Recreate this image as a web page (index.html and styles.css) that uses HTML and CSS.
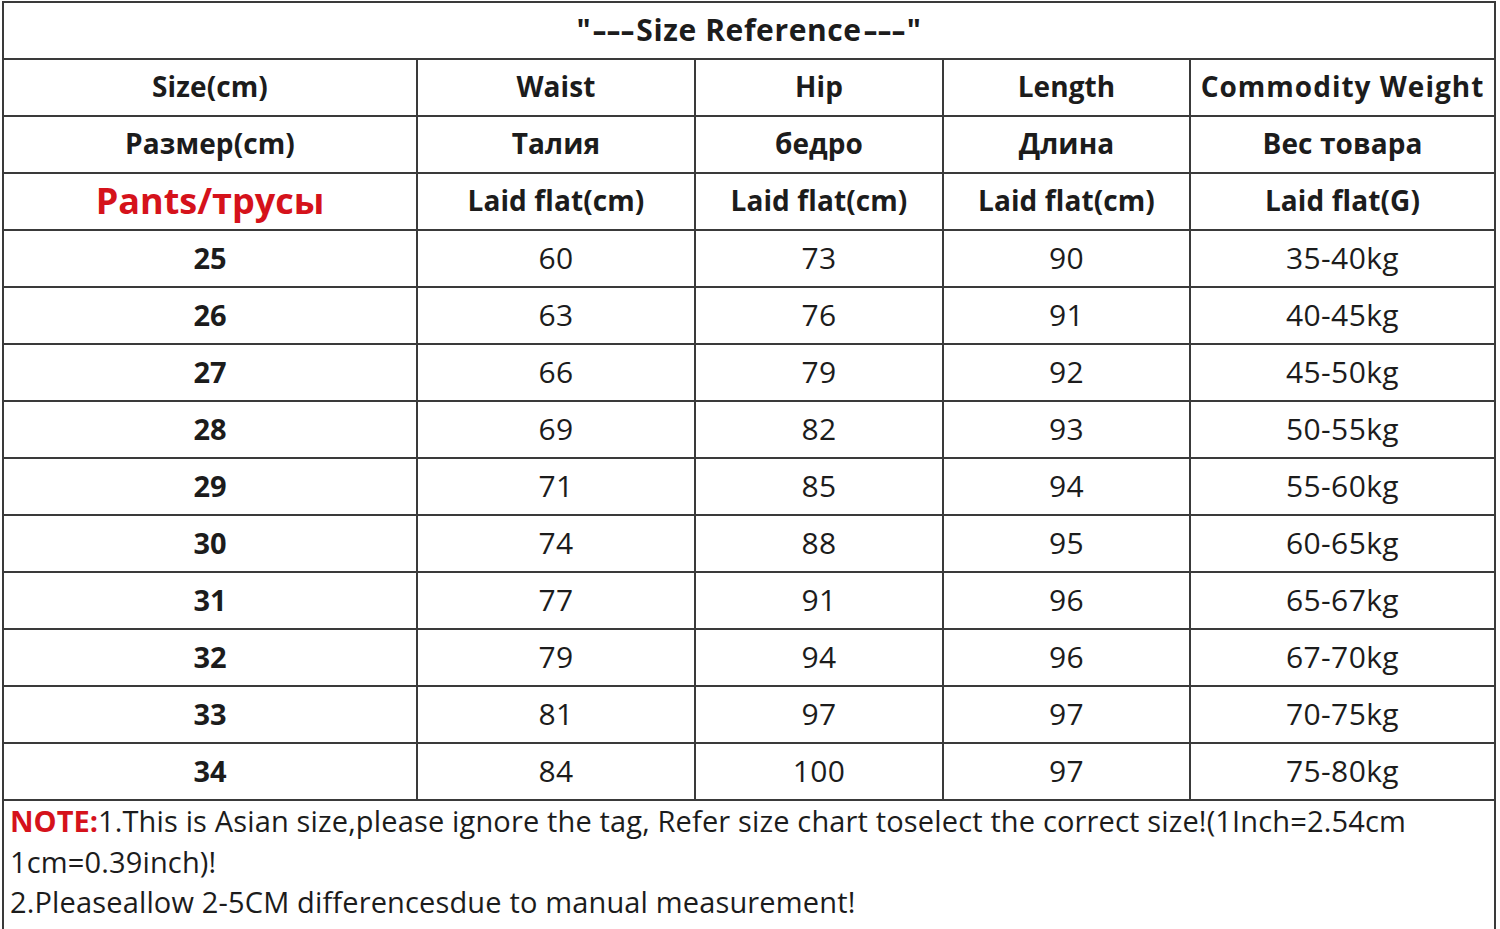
FILE: index.html
```html
<!DOCTYPE html>
<html>
<head>
<meta charset="utf-8">
<link rel="stylesheet" href="styles.css">
</head>
<body>
<div class="sheet">
  <div class="grid">
    <div class="cell title">"<span class="dash">---</span>Size Reference<span class="dash">---</span>"</div>
    <div class="cell hd">Size(cm)</div>
    <div class="cell hd">Waist</div>
    <div class="cell hd">Hip</div>
    <div class="cell hd">Length</div>
    <div class="cell hd wide">Commodity Weight</div>
    <div class="cell hd">Размер(cm)</div>
    <div class="cell hd">Талия</div>
    <div class="cell hd">бедро</div>
    <div class="cell hd">Длина</div>
    <div class="cell hd">Вес товара</div>
    <div class="cell hd red">Pants/трусы</div>
    <div class="cell hd">Laid flat(cm)</div>
    <div class="cell hd">Laid flat(cm)</div>
    <div class="cell hd">Laid flat(cm)</div>
    <div class="cell hd">Laid flat(G)</div>

    <div class="cell sz">25</div><div class="cell">60</div><div class="cell">73</div><div class="cell">90</div><div class="cell">35-40kg</div>
    <div class="cell sz">26</div><div class="cell">63</div><div class="cell">76</div><div class="cell">91</div><div class="cell">40-45kg</div>
    <div class="cell sz">27</div><div class="cell">66</div><div class="cell">79</div><div class="cell">92</div><div class="cell">45-50kg</div>
    <div class="cell sz">28</div><div class="cell">69</div><div class="cell">82</div><div class="cell">93</div><div class="cell">50-55kg</div>
    <div class="cell sz">29</div><div class="cell">71</div><div class="cell">85</div><div class="cell">94</div><div class="cell">55-60kg</div>
    <div class="cell sz">30</div><div class="cell">74</div><div class="cell">88</div><div class="cell">95</div><div class="cell">60-65kg</div>
    <div class="cell sz">31</div><div class="cell">77</div><div class="cell">91</div><div class="cell">96</div><div class="cell">65-67kg</div>
    <div class="cell sz">32</div><div class="cell">79</div><div class="cell">94</div><div class="cell">96</div><div class="cell">67-70kg</div>
    <div class="cell sz">33</div><div class="cell">81</div><div class="cell">97</div><div class="cell">97</div><div class="cell">70-75kg</div>
    <div class="cell sz">34</div><div class="cell">84</div><div class="cell">100</div><div class="cell">97</div><div class="cell">75-80kg</div>
  </div>
  <div class="note">
    <p><span class="note-label">NOTE:</span>1.This is Asian size,please ignore the tag, Refer size chart toselect the correct size!(1Inch=2.54cm</p>
    <p>1cm=0.39inch)!</p>
    <p>2.Pleaseallow 2-5CM differencesdue to manual measurement!</p>
  </div>
</div>
</body>
</html>
```

FILE: styles.css
```css
html, body {
  margin: 0;
  padding: 0;
  background: #ffffff;
}

body {
  font-family: "Open Sans", "Noto Sans", sans-serif;
  color: #1c1c1c;
  width: 1500px;
  height: 929px;
  overflow: hidden;
}

.sheet {
  margin: 1px 0 0 2px;
  width: 1494px;
}

.grid {
  display: grid;
  grid-template-columns: 412px 276px 246px 245px 303px;
  grid-auto-rows: 55px;
  gap: 2px;
  padding: 2px;
  background: #3a3a3a;
}

.cell {
  background: #ffffff;
  display: flex;
  align-items: center;
  justify-content: center;
  font-size: 30px;
  letter-spacing: 0.4px;
  white-space: nowrap;
  padding-bottom: 3px;
  box-sizing: border-box;
}

.title {
  grid-column: 1 / -1;
  font-weight: 700;
  font-size: 30px;
  letter-spacing: 0.6px;
  padding-bottom: 2px;
}

.dash {
  display: inline-block;
  transform: scaleX(1.45);
  letter-spacing: 0;
  margin: 0 8px;
}

.hd {
  font-size: 28px;
  font-weight: 700;
  letter-spacing: 0.1px;
}

.wide {
  letter-spacing: 1px;
}

.sz {
  font-weight: 700;
  font-size: 29px;
  letter-spacing: 0;
}

.red {
  color: #d5121b;
  font-size: 36px;
  letter-spacing: 0;
}

.note {
  border-left: 2px solid #3a3a3a;
  border-right: 2px solid #3a3a3a;
  padding: 0 0 0 6px;
  height: 140px;
}

.note p {
  margin: 0;
  font-size: 29px;
  line-height: 40.5px;
  letter-spacing: 0.15px;
  white-space: nowrap;
}

.note-label {
  color: #d5121b;
  font-weight: 700;
  letter-spacing: 0;
}
```
